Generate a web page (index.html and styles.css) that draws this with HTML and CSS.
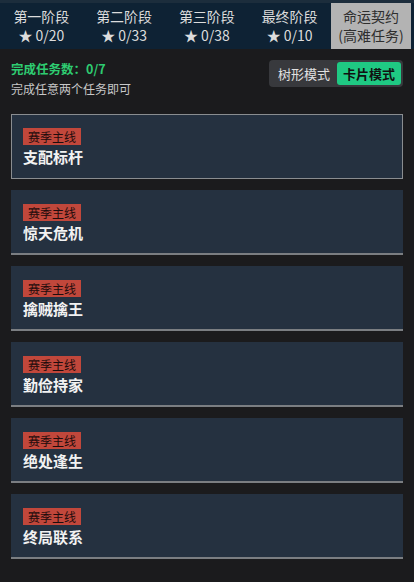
FILE: index.html
```html
<!DOCTYPE html>
<html lang="zh">
<head>
<meta charset="utf-8">
<link rel="stylesheet" href="styles.css">
</head>
<body>
<div class="page">
  <nav class="tabs">
    <div class="tab"><span>第一阶段</span><span>★ 0/20</span></div>
    <div class="tab"><span>第二阶段</span><span>★ 0/33</span></div>
    <div class="tab"><span>第三阶段</span><span>★ 0/38</span></div>
    <div class="tab"><span>最终阶段</span><span>★ 0/10</span></div>
    <div class="tab active"><span>命运契约</span><span>(高难任务)</span></div>
  </nav>
  <div class="summary">
    <div class="info">
      <div class="count">完成任务数：0/7</div>
      <div class="hint">完成任意两个任务即可</div>
    </div>
    <div class="toggle">
      <span class="opt">树形模式</span>
      <span class="opt on">卡片模式</span>
    </div>
  </div>
  <div class="cards">
    <div class="card selected"><span class="tag">赛季主线</span><div class="title">支配标杆</div></div>
    <div class="card"><span class="tag">赛季主线</span><div class="title">惊天危机</div></div>
    <div class="card"><span class="tag">赛季主线</span><div class="title">擒贼擒王</div></div>
    <div class="card"><span class="tag">赛季主线</span><div class="title">勤俭持家</div></div>
    <div class="card"><span class="tag">赛季主线</span><div class="title">绝处逢生</div></div>
    <div class="card"><span class="tag">赛季主线</span><div class="title">终局联系</div></div>
  </div>
</div>
</body>
</html>
```
FILE: styles.css
```css
html, body {
  margin: 0;
  padding: 0;
  background: #1b1b1d;
  font-family: "Noto Sans CJK SC", "Liberation Sans", sans-serif;
}
.page {
  width: 414px;
  height: 582px;
  overflow: hidden;
}
.tabs {
  display: grid;
  grid-template-columns: repeat(4, 1fr) 80px;
  height: 46px;
  padding-right: 3px;
  background: #0e2234;
  border-top: 3px solid #1c2d3c;
}
.tab {
  display: flex;
  flex-direction: column;
  align-items: center;
  justify-content: center;
  color: #dcdcdc;
  font-size: 14px;
  line-height: 19px;
}
.tab.active {
  background: #b3b3b3;
  color: #2e2e2e;
}
.summary {
  display: flex;
  justify-content: space-between;
  align-items: flex-start;
  padding: 11px 11px 0 11px;
  height: 62px;
  box-sizing: border-box;
}
.count {
  color: #2ecc71;
  font-size: 12.5px;
  font-weight: bold;
  line-height: 18px;
}
.hint {
  color: #c8c8c8;
  font-size: 12px;
  line-height: 18px;
  margin-top: 2px;
}
.toggle {
  display: flex;
  align-items: center;
  background: #38393d;
  border-radius: 4px;
  padding: 2px;
  gap: 4px;
}
.opt {
  font-size: 13px;
  color: #e0e0e0;
  padding: 0 3px 0 7px;
  line-height: 23px;
}
.opt.on {
  background: #1fc983;
  color: #111;
  font-weight: bold;
  border-radius: 3px;
  padding: 0 6px;
}
.cards {
  display: flex;
  flex-direction: column;
  gap: 11px;
  padding: 3px 11px 0 11px;
}
.card {
  height: 65px;
  box-sizing: border-box;
  background: #253140;
  border-bottom: 2px solid #7b7e82;
  padding: 14px 12px 0 12px;
}
.card.selected {
  border: 1px solid #8a8d90;
  padding: 13px 11px 0 11px;
}
.tag {
  display: block;
  width: fit-content;
  background: #c1473b;
  color: #1e0c0c;
  font-size: 12px;
  line-height: 17px;
  padding: 0 5px;
}
.title {
  color: #f2f2f2;
  font-size: 15px;
  font-weight: bold;
  line-height: 22px;
  margin-top: 1px;
}
```
